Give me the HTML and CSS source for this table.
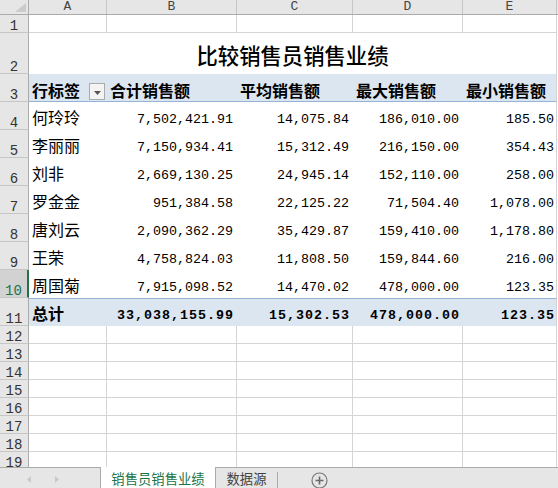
FILE: index.html
```html
<!DOCTYPE html>
<html lang="zh-CN">
<head>
<meta charset="utf-8">
<title>比较销售员销售业绩</title>
<link rel="stylesheet" href="styles.css">
</head>
<body>
<div class="app">
  <div class="sheet">
    <div class="row hdr">
      <div class="corner"><span class="tri"></span></div>
      <div class="ch">A</div><div class="ch">B</div><div class="ch">C</div><div class="ch">D</div><div class="ch">E</div>
    </div>
    <div class="row h18">
      <div class="rh">1</div>
      <div class="c"></div><div class="c"></div><div class="c"></div><div class="c"></div><div class="c"></div>
    </div>
    <div class="row h41">
      <div class="rh">2</div>
      <div class="title">比较销售员销售业绩</div>
    </div>
    <div class="row h28 phead">
      <div class="rh">3</div>
      <div class="p lab">行标签<span class="dd"><svg width="7" height="4" viewBox="0 0 7 4"><path d="M0 0H7L3.5 4Z" fill="#555"/></svg></span></div>
      <div class="p">合计销售额</div>
      <div class="p">平均销售额</div>
      <div class="p">最大销售额</div>
      <div class="p last">最小销售额</div>
    </div>
    <div class="row h28">
      <div class="rh">4</div>
      <div class="p">何玲玲</div><div class="p n">7,502,421.91</div><div class="p n">14,075.84</div><div class="p n">186,010.00</div><div class="p n last">185.50</div>
    </div>
    <div class="row h28">
      <div class="rh">5</div>
      <div class="p">李丽丽</div><div class="p n">7,150,934.41</div><div class="p n">15,312.49</div><div class="p n">216,150.00</div><div class="p n last">354.43</div>
    </div>
    <div class="row h28">
      <div class="rh">6</div>
      <div class="p">刘非</div><div class="p n">2,669,130.25</div><div class="p n">24,945.14</div><div class="p n">152,110.00</div><div class="p n last">258.00</div>
    </div>
    <div class="row h28">
      <div class="rh">7</div>
      <div class="p">罗金金</div><div class="p n">951,384.58</div><div class="p n">22,125.22</div><div class="p n">71,504.40</div><div class="p n last">1,078.00</div>
    </div>
    <div class="row h28">
      <div class="rh">8</div>
      <div class="p">唐刘云</div><div class="p n">2,090,362.29</div><div class="p n">35,429.87</div><div class="p n">159,410.00</div><div class="p n last">1,178.80</div>
    </div>
    <div class="row h28">
      <div class="rh">9</div>
      <div class="p">王荣</div><div class="p n">4,758,824.03</div><div class="p n">11,808.50</div><div class="p n">159,844.60</div><div class="p n last">216.00</div>
    </div>
    <div class="row h28">
      <div class="rh sel">10</div>
      <div class="p">周国菊</div><div class="p n">7,915,098.52</div><div class="p n">14,470.02</div><div class="p n">478,000.00</div><div class="p n last">123.35</div>
    </div>
    <div class="row h28 ptotal">
      <div class="rh">11</div>
      <div class="p">总计</div><div class="p n">33,038,155.99</div><div class="p n">15,302.53</div><div class="p n">478,000.00</div><div class="p n last">123.35</div>
    </div>
    <div class="row h18"><div class="rh">12</div><div class="c"></div><div class="c"></div><div class="c"></div><div class="c"></div><div class="c"></div></div>
    <div class="row h18"><div class="rh">13</div><div class="c"></div><div class="c"></div><div class="c"></div><div class="c"></div><div class="c"></div></div>
    <div class="row h18"><div class="rh">14</div><div class="c"></div><div class="c"></div><div class="c"></div><div class="c"></div><div class="c"></div></div>
    <div class="row h18"><div class="rh">15</div><div class="c"></div><div class="c"></div><div class="c"></div><div class="c"></div><div class="c"></div></div>
    <div class="row h18"><div class="rh">16</div><div class="c"></div><div class="c"></div><div class="c"></div><div class="c"></div><div class="c"></div></div>
    <div class="row h18"><div class="rh">17</div><div class="c"></div><div class="c"></div><div class="c"></div><div class="c"></div><div class="c"></div></div>
    <div class="row h18"><div class="rh">18</div><div class="c"></div><div class="c"></div><div class="c"></div><div class="c"></div><div class="c"></div></div>
    <div class="row h18"><div class="rh">19</div><div class="c"></div><div class="c"></div><div class="c"></div><div class="c"></div><div class="c"></div></div>
  </div>
  <div class="tabs">
    <div class="nav">
      <svg class="arrow" width="4" height="7" viewBox="0 0 4 7"><path d="M4 0V7L0 3.5Z" fill="#c9c9c9"/></svg>
      <svg class="arrow" width="4" height="7" viewBox="0 0 4 7"><path d="M0 0V7L4 3.5Z" fill="#c9c9c9"/></svg>
    </div>
    <div class="tab active">销售员销售业绩</div>
    <div class="tab">数据源</div>
    <div class="rest">
      <span class="sep"></span>
      <svg class="plus" width="17" height="17" viewBox="0 0 17 17"><circle cx="8.5" cy="8.5" r="7.5" fill="none" stroke="#7a7a7a" stroke-width="1.2"/><path d="M8.5 4.5V12.5M4.5 8.5H12.5" stroke="#6a6a6a" stroke-width="1.6"/></svg>
    </div>
  </div>
</div>
</body>
</html>
```

FILE: styles.css
```css
* { box-sizing: border-box; margin: 0; padding: 0; }
html, body { width: 558px; height: 488px; overflow: hidden; background: #fff; }
body { font-family: "Noto Sans CJK SC", sans-serif; color: #000; }

.app { display: flex; flex-direction: column; height: 488px; }
.sheet { height: 467px; overflow: hidden; display: flex; flex-direction: column; }

.row { display: grid; grid-template-columns: 29px 78px 130px 116px 110px 94px 1fr; flex: none; }
.hdr { height: 15px; background: #e6e6e6; border-bottom: 1px solid #ababab; }
.h18 { height: 18px; }
.h41 { height: 41px; }
.h28 { height: 28px; }

.corner { border-right: 1px solid #ababab; display: flex; justify-content: flex-end; align-items: flex-end; padding: 0 2px 2px 0; }
.tri { width: 0; height: 0; border-left: 11px solid transparent; border-bottom: 9px solid #cbcbcb; }

.ch { border-right: 1px solid #c6c6c6; text-align: center; font-family: "Liberation Mono", monospace; font-size: 13px; line-height: 14px; color: #444; }

.rh { background: #e6e6e6; border-right: 1px solid #ababab; border-bottom: 1px solid #c6c6c6; display: flex; justify-content: center; align-items: flex-end; font-family: "Liberation Mono", monospace; font-size: 14px; line-height: 12px; color: #333; }
.rh.sel { background: #d2d2d2; color: #217346; border-right: 2px solid #217346; }

.c { border-right: 1px solid #d4d4d4; border-bottom: 1px solid #d4d4d4; }

.title { grid-column: span 5; border-right: 1px solid #d4d4d4; display: flex; justify-content: center; align-items: flex-end; padding-bottom: 8px; font-size: 21.33px; line-height: 22px; font-weight: 500; }

.p { display: flex; align-items: flex-end; padding: 0 2px 5px 3px; font-size: 16px; line-height: 16px; white-space: nowrap; }
.p.n { justify-content: flex-end; font-family: "Liberation Mono", monospace; font-size: 13.33px; padding-bottom: 2px; padding-right: 4px; }
.p.n.last { padding-right: 2px; }
.p.last { border-right: 1px solid #d4d4d4; }

.phead .p { background: #dce6f1; border-bottom: 1px solid #95b3d7; font-weight: 700; padding-bottom: 3px; }
.ptotal .p { background: #dce6f1; border-top: 1px solid #95b3d7; font-weight: 700; }
.ptotal .p.n { letter-spacing: 1px; padding-right: 3px; }
.ptotal .p.n.last { padding-right: 1px; }

.dd { margin-left: auto; margin-bottom: -2px; width: 16px; height: 17px; border: 1px solid #ababab; background: #f4f4f4; display: flex; align-items: center; justify-content: center; padding-top: 2px; }

.tabs { height: 21px; display: flex; background: #e6e6e6; font-size: 13.33px; line-height: 16px; }
.nav { width: 101px; border-top: 1px solid #ababab; border-right: 1px solid #ababab; display: flex; align-items: center; padding: 3px 0 0 27px; gap: 24px; }
.tab { display: flex; justify-content: center; align-items: center; padding-top: 3px; color: #444; }
.tab.active { width: 114px; background: #fff; color: #217346; }
.tab:not(.active) { width: 62px; border-left: 1px solid #ababab; border-top: 1px solid #ababab; padding-top: 2px; }
.rest { flex: 1; border-top: 1px solid #ababab; display: flex; align-items: center; }
.sep { width: 1px; height: 16px; align-self: flex-end; background: #ababab; }
.plus { margin-left: 33px; margin-top: 5px; }
```
